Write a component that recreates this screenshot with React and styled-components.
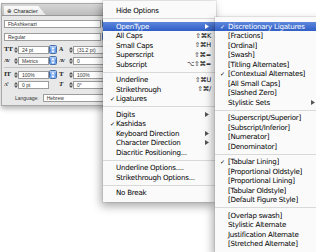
import React from 'react';
import styled, {createGlobalStyle, css} from 'styled-components';

const Global = createGlobalStyle`
  html, body {
    margin: 0;
    padding: 0;
    background: #fff;
    overflow: hidden;
  }
  body {
    font-family: "Liberation Sans", Arial, "DejaVu Sans", sans-serif;
  }
`;

const Stage = styled.div`
  position: relative;
  width: 316px;
  height: 252px;
  overflow: hidden;
  background: #fff;
`;

/* ---------- character palette ---------- */

const Palette = styled.div`
  margin: 3px 0 0 1px;
  width: 110px;
  height: 101px;
  background: #e8e8e8;
  border: 1px solid #a8a8a8;
  box-shadow: 0 3px 5px rgba(0, 0, 0, .28);
  display: flex;
  flex-direction: column;
`;

const TitleBar = styled.div`
  height: 11px;
  display: flex;
  align-items: flex-end;
  padding-left: 2px;
  background: linear-gradient(#d6d6d6, #bdbdbd);
  border-bottom: 1px solid #989898;
`;

const Tab = styled.div`
  height: 9px;
  display: flex;
  align-items: center;
  gap: 2px;
  padding: 0 8px 0 3px;
  font-size: 5.5px;
  color: #222;
  background: linear-gradient(#fbfbfb, #e8e8e8);
  clip-path: polygon(0 0, 82% 0, 100% 100%, 0 100%);
`;

const Body = styled.div`
  display: flex;
  flex-direction: column;
  padding: 3px 2px 0 2px;
`;

const FieldRow = styled.div`
  display: flex;
  align-items: center;
  gap: 1px;
  margin-bottom: ${p => p.gap || 0}px;
`;

const Field = styled.div`
  flex: ${p => (p.grow ? 1 : '0 0 auto')};
  width: ${p => (p.w ? p.w + 'px' : 'auto')};
  height: 6px;
  line-height: 6px;
  background: #fff;
  border: 1px solid #9c9c9c;
  padding-left: 3px;
  font-size: 5px;
  color: #333;
  white-space: nowrap;
  overflow: hidden;
`;

const AquaButton = styled.div`
  flex: 0 0 6px;
  height: 7px;
  border-radius: 1.5px;
  background: linear-gradient(#b8d3f7, #4f8be2 55%, #7fb0f0);
  border: 1px solid #4a6fa8;
  display: flex;
  align-items: center;
  justify-content: center;
`;

const Controls = styled.div`
  display: grid;
  grid-template-columns: 52px 52px;
  column-gap: 3px;
  row-gap: ${p => p.rowGap || 4}px;
`;

const Control = styled.div`
  display: flex;
  align-items: center;
  height: 7px;
`;

const Glyph = styled.span`
  flex: 0 0 9px;
  font-family: "Liberation Serif", "DejaVu Serif", serif;
  font-weight: bold;
  font-size: ${p => p.size || 7}px;
  font-style: ${p => (p.italic ? 'italic' : 'normal')};
  line-height: 7px;
  color: #222;
  letter-spacing: -0.5px;
`;

const Stepper = styled.span`
  flex: 0 0 5px;
  display: flex;
  justify-content: center;
`;

const Separator = styled.div`
  height: 1px;
  background: #c4c4c4;
  margin: ${p => p.m || '3px 0'};
`;

const LangRow = styled.div`
  display: flex;
  align-items: center;
  gap: 4px;
  padding-left: 11px;
  margin-top: 6px;
  font-size: 5px;
  color: #333;
`;

const Updown = ({color = '#555'}) => (
  <svg width="4" height="6" viewBox="0 0 4 6">
    <path d="M0 2.5 L2 0 L4 2.5Z M0 3.5 L2 6 L4 3.5Z" fill={color}/>
  </svg>
);

const Param = ({glyph, size, italic, value, menu, w = 26}) => (
  <Control>
    <Glyph size={size} italic={italic}>{glyph}</Glyph>
    <Stepper><Updown/></Stepper>
    <Field w={w}>{value}</Field>
    {menu && <AquaButton><Updown color="#fff"/></AquaButton>}
  </Control>
);

/* ---------- menus ---------- */

const Menu = styled.div`
  position: absolute;
  left: ${p => p.x}px;
  top: ${p => p.y}px;
  width: ${p => p.w}px;
  padding: 5px 0 4px;
  background: rgba(250, 250, 250, .98);
  box-shadow: -2px 4px 9px rgba(0, 0, 0, .35), 0 0 0 1px rgba(0, 0, 0, .07);
  font-family: "DejaVu Sans", "Liberation Sans", sans-serif;
  font-size: 7.1px;
  letter-spacing: -0.25px;
  color: #000;
  z-index: ${p => p.z || 1};
`;

const Item = styled.div`
  height: 9.5px;
  display: flex;
  align-items: center;
  padding: 0 ${p => p.pr || 5}px 0 ${p => p.pl || 6}px;
  white-space: nowrap;
  ${p => p.active && css`
    color: #fff;
    background: linear-gradient(#5d86dc, #2f5fc6);
  `}
`;

const Check = styled.span`
  flex: 0 0 ${p => p.w || 6}px;
  font-size: 6px;
`;

const Shortcut = styled.span`
  margin-left: auto;
  font-size: 6.5px;
  letter-spacing: -0.2px;
`;

const Arrow = styled.span`
  margin-left: auto;
  display: flex;
  padding-right: 2px;
`;

const Divider = styled.div`
  height: 6px;
  display: flex;
  align-items: center;
  &::after {
    content: '';
    flex: 1;
    height: 1px;
    background: #d9d9d9;
  }
`;

const Tri = ({color}) => (
  <svg width="4" height="5" viewBox="0 0 4 5">
    <path d="M0 0 L4 2.5 L0 5Z" fill={color}/>
  </svg>
);

const mainItems = [
  {t: 'Hide Options'},
  '-',
  {t: 'OpenType', sub: true, active: true},
  {t: 'All Caps', k: '⇧⌘K'},
  {t: 'Small Caps', k: '⇧⌘H'},
  {t: 'Superscript', k: '⇧⌘='},
  {t: 'Subscript', k: '⌥⇧⌘='},
  '-',
  {t: 'Underline', k: '⇧⌘U'},
  {t: 'Strikethrough', k: '⇧⌘/'},
  {t: 'Ligatures', check: true},
  '-',
  {t: 'Digits', sub: true},
  {t: 'Kashidas', check: true},
  {t: 'Keyboard Direction', sub: true},
  {t: 'Character Direction', sub: true},
  {t: 'Diacritic Positioning...'},
  '-',
  {t: 'Underline Options....'},
  {t: 'Strikethrough Options...'},
  '-',
  {t: 'No Break'},
];

const openTypeItems = [
  {t: 'Discretionary Ligatures', check: true, active: true},
  {t: '[Fractions]'},
  {t: '[Ordinal]'},
  {t: '[Swash]'},
  {t: '[Titling Alternates]'},
  {t: '[Contextual Alternates]', check: true},
  {t: '[All Small Caps]'},
  {t: '[Slashed Zero]'},
  {t: 'Stylistic Sets', sub: true},
  '-',
  {t: '[Superscript/Superior]'},
  {t: '[Subscript/Inferior]'},
  {t: '[Numerator]'},
  {t: '[Denominator]'},
  '-',
  {t: '[Tabular Lining]', check: true},
  {t: '[Proportional Oldstyle]'},
  {t: '[Proportional Lining]'},
  {t: '[Tabular Oldstyle]'},
  {t: '[Default Figure Style]'},
  '-',
  {t: '[Overlap swash]'},
  {t: 'Stylistic Alternate'},
  {t: 'Justification Alternate'},
  {t: '[Stretched Alternate]'},
];

const MenuList = ({items, checkW, pl, pr}) => items.map((it, i) => {
  if (it === '-') return <Divider key={i}/>;
  return <Item key={i} active={it.active} pl={pl} pr={pr}>
    <Check w={checkW}>{it.check ? '✓' : ''}</Check>
    <span>{it.t}</span>
    {it.k && <Shortcut>{it.k}</Shortcut>}
    {it.sub && <Arrow><Tri color={it.active ? '#fff' : '#555'}/></Arrow>}
  </Item>;
});

export default function App() {
  return <Stage>
    <Global/>
    <Palette>
      <TitleBar>
        <Tab><span>⊕</span><span>Character</span></Tab>
      </TitleBar>
      <Body>
        <FieldRow gap={4}>
          <Field grow>FbAshkenazi</Field>
          <AquaButton><Updown color="#fff"/></AquaButton>
        </FieldRow>
        <FieldRow gap={5}>
          <Field grow>Regular</Field>
          <AquaButton><Updown color="#fff"/></AquaButton>
        </FieldRow>
        <Controls rowGap={4}>
          <Param glyph="TT" value="24 pt" menu/>
          <Param glyph="A" size={6} value="(31.2 pt)" menu/>
          <Param glyph="AV" size={5} value="Metrics" menu/>
          <Param glyph="AV" size={5} value="0" menu/>
        </Controls>
        <Separator m="3px 0 3px"/>
        <Controls rowGap={3}>
          <Param glyph="IT" value="100%" menu/>
          <Param glyph="T" value="100%" menu/>
          <Param glyph="Aª" size={5} value="0 pt"/>
          <Param glyph="T" italic value="0°"/>
        </Controls>
        <LangRow>
          <span>Language:</span>
          <Field grow>Hebrew</Field>
        </LangRow>
      </Body>
    </Palette>

    <Menu x={103} y={1} w={113} z={2}>
      <MenuList items={mainItems} checkW={6} pl={7} pr={5}/>
    </Menu>
    <Menu x={215} y={16.5} w={112} z={3}>
      <MenuList items={openTypeItems} checkW={8} pl={5} pr={10}/>
    </Menu>
  </Stage>;
}
